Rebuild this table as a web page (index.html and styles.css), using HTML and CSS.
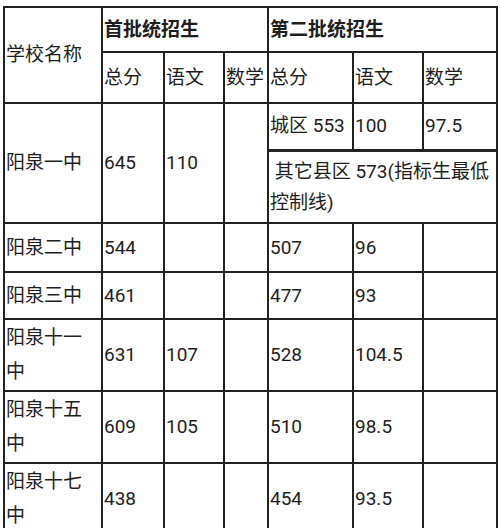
FILE: index.html
```html
<!DOCTYPE html>
<html lang="zh">
<head>
<meta charset="utf-8">
<title>招生分数线</title>
<link rel="stylesheet" href="styles.css">
</head>
<body>
<table class="score">
  <colgroup>
    <col class="c1"><col class="c2"><col class="c3"><col class="c4"><col class="c5"><col class="c6"><col class="c7">
  </colgroup>
  <tr class="h1">
    <td rowspan="2">学校名称</td>
    <td colspan="3" class="bold">首批统招生</td>
    <td colspan="3" class="bold">第二批统招生</td>
  </tr>
  <tr class="h2">
    <td>总分</td><td>语文</td><td>数学</td><td>总分</td><td>语文</td><td>数学</td>
  </tr>
  <tr class="r1a">
    <td rowspan="2">阳泉一中</td>
    <td rowspan="2" class="thick">645</td>
    <td rowspan="2" class="thick">110</td>
    <td rowspan="2"></td>
    <td>城区 553</td><td>100</td><td>97.5</td>
  </tr>
  <tr class="r1b">
    <td colspan="3" class="wide">&nbsp;其它县区 573(指标生最低<br>控制线)</td>
  </tr>
  <tr class="r2">
    <td>阳泉二中</td><td>544</td><td></td><td></td><td>507</td><td>96</td><td></td>
  </tr>
  <tr class="r3">
    <td>阳泉三中</td><td>461</td><td></td><td></td><td>477</td><td>93</td><td></td>
  </tr>
  <tr class="r4">
    <td>阳泉十一<br>中</td><td>631</td><td>107</td><td></td><td>528</td><td>104.5</td><td></td>
  </tr>
  <tr class="r4">
    <td>阳泉十五<br>中</td><td>609</td><td>105</td><td></td><td>510</td><td>98.5</td><td></td>
  </tr>
  <tr class="r4">
    <td>阳泉十七<br>中</td><td>438</td><td></td><td></td><td>454</td><td>93.5</td><td></td>
  </tr>
</table>
</body>
</html>
```

FILE: styles.css
```css
html, body {
  margin: 0;
  padding: 0;
  background: #ffffff;
}
body {
  padding: 6px 0 0 3px;
  overflow: hidden;
  height: 528px;
  box-sizing: border-box;
}
.score {
  border-collapse: collapse;
  table-layout: fixed;
  width: 495px;
  font-family: Roboto, "Noto Sans CJK SC", sans-serif;
  font-size: 19px;
  color: #1e1e1e;
}
.score td {
  border: 2px solid #222222;
  padding: 0 1px;
  vertical-align: middle;
  text-align: left;
  line-height: 34px;
  white-space: nowrap;
}
.c1 { width: 98px; }
.c2 { width: 62px; }
.c3 { width: 60px; }
.c4 { width: 44px; }
.c5 { width: 85px; }
.c6 { width: 70px; }
.c7 { width: 74px; }
.bold { font-weight: bold; padding-left: 3px; }
.thick { border-left-width: 3px; }
.h1 { height: 45px; }
.h2 { height: 51px; }
.r1a { height: 47px; }
.r1b { height: 73px; }
.r1b .wide { line-height: 31px; border-top-width: 3px; }
.r2 { height: 49px; }
.r3 { height: 47px; }
.r4 { height: 72px; }
```
